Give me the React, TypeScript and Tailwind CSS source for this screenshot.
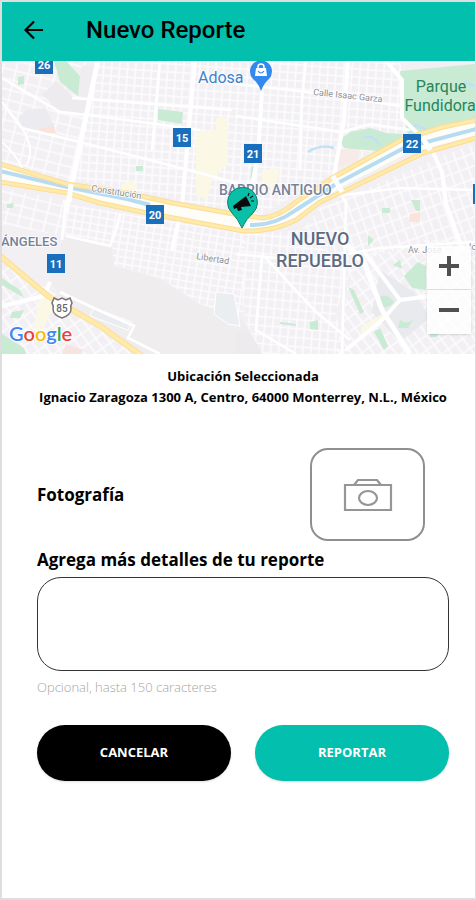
import type { ReactNode } from "react";

const shields = [
  { n: "26", x: 44, y: 65 },
  { n: "15", x: 182, y: 138 },
  { n: "21", x: 253, y: 154 },
  { n: "22", x: 412, y: 144 },
  { n: "20", x: 155, y: 215 },
  { n: "11", x: 56, y: 264 },
];

const googleLetters = [
  { c: "G", fill: "#4285f4" },
  { c: "o", fill: "#ea4335" },
  { c: "o", fill: "#fbbc05" },
  { c: "g", fill: "#4285f4" },
  { c: "l", fill: "#34a853" },
  { c: "e", fill: "#ea4335" },
];

function StreetPattern({ id, w, h, angle }: { id: string; w: number; h: number; angle: number }) {
  return (
    <pattern id={id} width={w} height={h} patternUnits="userSpaceOnUse" patternTransform={`rotate(${angle})`}>
      <path d={`M0 ${h / 2}H${w}M${w / 2} 0V${h}`} stroke="#fcfbfd" strokeWidth="1.6" />
    </pattern>
  );
}

function Halo({ children, ...rest }: { children: ReactNode } & React.SVGProps<SVGTextElement>) {
  return (
    <text stroke="#ffffff" strokeWidth="2" strokeOpacity="0.8" paintOrder="stroke" strokeLinejoin="round" {...rest}>
      {children}
    </text>
  );
}

function CityMap() {
  return (
    <svg
      viewBox="2 61 473 293"
      preserveAspectRatio="xMidYMid slice"
      className="block h-full w-full font-[Roboto,sans-serif]"
      role="img"
      aria-label="Mapa de Monterrey"
    >
      <defs>
        <StreetPattern id="north" w={8} h={8} angle={4} />
        <StreetPattern id="west" w={13} h={10} angle={14} />
        <StreetPattern id="south" w={8} h={7} angle={9} />
        <StreetPattern id="east" w={9} h={12} angle={-20} />
        <StreetPattern id="southeast" w={8} h={9} angle={5} />
        <StreetPattern id="diagonal" w={9} h={12} angle={-36} />
      </defs>

      <rect x="0" y="60" width="480" height="300" fill="#f3f0f4" />

      {/* street grids */}
      <path d="M96 60H400L410 130L335 172L255 218L170 198L76 180Z" fill="url(#north)" />
      <path d="M0 60H96L72 186L0 166Z" fill="url(#west)" />
      <path d="M0 188L68 200L64 236L0 224Z" fill="url(#west)" />
      <path d="M66 203L245 234L244 318L200 304L160 278L114 265L112 246L64 236Z" fill="url(#south)" />
      <path d="M320 208L476 142V250H400L350 262L300 232Z" fill="url(#east)" />
      <path d="M240 234L300 230L352 268L336 312L345 354H262L244 320Z" fill="url(#southeast)" />
      <path d="M352 262L425 240H476V354H336Z" fill="url(#diagonal)" />
      <path d="M0 260L50 290L140 354H0Z" fill="url(#diagonal)" />

      {/* open land, yards and campuses */}
      <path d="M64 236L112 247L114 266L160 279L200 305L243 320L262 354H142L62 300L50 280Z" fill="#f0edef" />
      <path d="M46 92L56 80L74 98L92 100L88 114L58 110L42 94Z" fill="#eeebef" />
      <path d="M19 118L26 110L46 108L54 126L42 132L22 130Z" fill="#ebebf0" />
      <path d="M82 66L98 64L92 98L76 96Z" fill="#f0edf1" />
      <path d="M216 292L234 294L240 326L228 324L214 314Z" fill="#ebeef0" stroke="#fff" />
      <path d="M94 308L132 322L128 330L90 316Z" fill="#e9ecf0" stroke="#fff" />
      <path d="M185 209L240 221L236 226L186 216Z" fill="#eceaf2" />
      <path d="M380 270L414 292L430 318L400 342L372 312Z" fill="#e8eaee" />
      <path d="M2 338Q0 326 12 342V354H2Z" fill="#eeebee" />
      <path d="M236 332Q250 326 262 354H236Z" fill="#eeebee" />
      <path d="M338 150L360 146L358 162L338 168Z" fill="#f7ebea" />
      <path d="M40 128L54 126L56 133H40Z" fill="#fae3dc" />
      <path d="M410 214L420 212V222H409Z" fill="#fbe3d9" />
      <path d="M66 344L84 350L80 354H62Z" fill="#f8e3e3" />

      {/* commercial areas */}
      <g fill="#fcf8e6">
        <path d="M196 132L216 130V118H228V164L214 176L206 200L196 194Z" />
        <path d="M262 170L280 168L276 184L262 190Z" />
        <path d="M122 184L130 180L138 186L134 192H122Z" />
        <path d="M40 290L48 284L52 310L40 336L34 330Z" />
        <path d="M362 326L386 312L388 318L360 336Z" />
      </g>

      {/* parks */}
      <g fill="#c9ebd4">
        <path d="M54 61H66L80 76L78 96L60 82Z" />
        <path d="M158 109L183 112L182 124L158 120Z" />
        <path d="M18 77L24 76V84L18 85Z" />
        <path d="M136 166H143V171H136Z" />
        <path d="M7 204L14 203L13 208H7Z" />
        <path d="M400 71L475 64V124L450 124L432 132L408 134L402 110Z" />
        <path d="M340 140L350 132L370 128L386 133L402 134V146L388 152L344 148Z" />
        <path d="M404 276L418 262L426 266V290L412 288Z" />
        <path d="M393 265L400 260L402 269Z" />
        <path d="M368 235L374 240L368 246Z" />
        <path d="M348 287L354 290L364 312L360 314Z" />
        <path d="M374 332L380 328L388 346L384 350Z" />
        <path d="M378 300Q384 290 394 302Q388 310 378 306Z" />
        <path d="M400 320Q408 326 414 318L408 328H398Z" />
        <path d="M310 322L318 320V330L310 329Z" />
        <path d="M382 208H390V213H382Z" />
        <path d="M411 200H420V211H416Z" />
        <path d="M12 312L24 310L20 318L10 318Z" />
        <path d="M2 278L20 290L24 298L2 285Z" />
        <path d="M2 334L24 348L26 354H2Z" />
        <path d="M252 166H257L254 178H250Z" />
        <path d="M430 333H440L436 337H430Z" />
      </g>
      <path d="M280 323L296 325" stroke="#c9ebd4" strokeWidth="2" />

      {/* streams */}
      <g fill="none" stroke="#bfe0f7" strokeWidth="2.4">
        <path d="M364 138Q374 134 380 146" />
        <path d="M308 152Q320 144 334 148" />
        <path d="M408 128Q418 122 428 132" />
        <path d="M464 82L475 86" />
      </g>

      {/* main streets */}
      <g fill="none" stroke="#ffffff" strokeWidth="2.6">
        <path d="M98 60L66 212" strokeWidth="5" />
        <path d="M66 200L62 240" />
        <path d="M195 60L182 206L172 250" strokeWidth="4" />
        <path d="M160 60L152 150" />
        <path d="M2 78L60 112L96 116L200 130" />
        <path d="M72 98L232 110" />
        <path d="M2 102L22 128L80 142L196 172L240 184" />
        <path d="M22 128Q36 150 26 166" strokeWidth="2" />
        <path d="M2 142Q16 154 22 168" strokeWidth="2" />
        <path d="M262 92L258 154L252 186" strokeWidth="4" />
        <path d="M348 60L344 120L334 176" strokeWidth="4" />
        <path d="M236 84L316 93L400 106" />
        <path d="M236 116L342 132L370 124L410 130" />
        <path d="M385 60L402 80V118L430 146L442 172L446 204L462 248" strokeWidth="4" />
        <path d="M306 60L302 100L300 170" />
        <path d="M336 183L346 204L342 354" />
        <path d="M336 196L400 188L475 190" />
        <path d="M236 254L360 266" />
        <path d="M342 240L364 262L382 310L410 354" strokeWidth="5" />
        <path d="M364 252L400 300L430 296" strokeWidth="4" />
        <path d="M400 300L382 320L346 350" strokeWidth="4" />
        <path d="M348 254L380 248L475 242" />
        <path d="M262 254L316 312L350 340" />
        <path d="M262 256L256 330L296 354" />
        <path d="M66 236L110 246Q118 226 120 214" />
        <path d="M2 306L44 296L50 282" strokeWidth="4" />
        <path d="M60 292L98 310L134 326L128 338L160 354" />
      </g>

      {/* river and expressways */}
      <g fill="none" strokeLinejoin="round">
        <path d="M0 172L67 189L150 207L230 223L262 224L296 212L334 183L404 147L476 128" stroke="#fffdf7" strokeWidth="14" />
        <path d="M0 171L67 187L127 199L150 205" stroke="#b6dcf4" strokeWidth="4" />
        <path d="M250 225Q274 226 296 210L336 184L404 148L476 129" stroke="#b6dcf4" strokeWidth="4" />
        <g stroke="#fbdd98" strokeWidth="5">
          <path d="M0 164L67 184L127 193L173 203L240 215L263 218Q280 216 296 202L334 177L403 139L443 127L476 120" />
          <path d="M0 182L67 193L100 203L147 213L216 226L244 231Q272 232 296 220L320 202L353 187L423 153L476 138" />
          <path d="M0 256L48 296L100 326L142 356" strokeWidth="6" />
        </g>
        <g stroke="#ffeaa9" strokeWidth="3">
          <path d="M0 164L67 184L127 193L173 203L240 215L263 218Q280 216 296 202L334 177L403 139L443 127L476 120" />
          <path d="M0 182L67 193L100 203L147 213L216 226L244 231Q272 232 296 220L320 202L353 187L423 153L476 138" />
          <path d="M0 256L48 296L100 326L142 356" strokeWidth="4" />
        </g>
        <path d="M71 184L69 202M333 176L342 192M424 140L430 150" stroke="#ffffff" strokeWidth="5" />
      </g>

      {/* labels */}
      <g fill="#8b8f96" fontSize="9">
        <Halo x="91" y="191" transform="rotate(9 91 191)">Constitución</Halo>
        <Halo x="313" y="95" transform="rotate(6 313 95)">Calle Isaac Garza</Halo>
        <Halo x="196" y="259" transform="rotate(9 196 259)">Libertad</Halo>
        <Halo x="408" y="253">Av. José</Halo>
        <Halo x="469" y="250">Ic</Halo>
      </g>
      <g fill="#76829a" fontWeight="500">
        <Halo x="219" y="195" fontSize="14">BARRIO ANTIGUO</Halo>
        <Halo x="1" y="246" fontSize="13">ÁNGELES</Halo>
      </g>
      <g fill="#5c6b82" fontSize="18" fontWeight="500" textAnchor="middle">
        <Halo x="320" y="245">NUEVO</Halo>
        <Halo x="320" y="267">REPUEBLO</Halo>
      </g>
      <Halo x="198" y="83" fill="#3c82cc" fontSize="16">Adosa</Halo>
      <g fill="#25855a" fontSize="16" textAnchor="middle">
        <text x="441" y="92">Parque</text>
        <text x="440" y="111">Fundidora</text>
      </g>

      {shields.map((s) => (
        <g key={s.n}>
          <rect x={s.x - 9} y={s.y - 10} width="18" height="19" fill="#1a6fbd" />
          <text x={s.x} y={s.y + 4} fill="#ffffff" fontSize="11" fontWeight="700" textAnchor="middle">
            {s.n}
          </text>
        </g>
      ))}
      <rect x="473" y="184" width="4" height="20" fill="#1a6fbd" />

      <path
        d="M54 298L58 300L62 298L66 300L70 298L72 303Q70 306 71 309Q71 315 62 318Q53 315 53 309Q54 306 52 303Z"
        fill="#ffffff"
        stroke="#777777"
        strokeWidth="1.5"
      />
      <text x="62" y="312" fill="#666666" fontSize="10" fontWeight="500" textAnchor="middle">
        85
      </text>

      {/* shop pin */}
      <path d="M261 91Q258 83 253 79A11 11 0 1 1 269 79Q264 83 261 91Z" fill="#3289ee" />
      <path d="M256 68H266L267 76H255Z" fill="#ffffff" />
      <path d="M258 69V67A3 3 0 0 1 264 67V69" fill="none" stroke="#ffffff" strokeWidth="1.5" />
      <path d="M258 71Q261 75 264 71" fill="none" stroke="#3289ee" strokeWidth="1.2" />

      {/* selected location pin */}
      <path
        d="M242 228Q238 219 232 213A15 15 0 1 1 253 213Q246 219 242 228Z"
        fill="#0abfa8"
        stroke="#12806f"
        strokeWidth="1"
      />
      <path d="M233 206L246 196L251 206L241 207L242 210L238 211L237 208L234 209Z" fill="#0a0a0a" />
      <path d="M248 196L249 193M250 198L253 196M251 201H254" stroke="#0a0a0a" strokeWidth="1.2" />

      <text
        x="9"
        y="341"
        fontSize="20"
        fontWeight="600"
        stroke="#ffffff"
        strokeWidth="2"
        paintOrder="stroke"
        className="font-[Lato,sans-serif]"
      >
        {googleLetters.map((l, i) => (
          <tspan key={i} fill={l.fill}>
            {l.c}
          </tspan>
        ))}
      </text>
    </svg>
  );
}

export default function App() {
  return (
    <div className="flex min-h-screen flex-col border-2 border-r border-[#dedede] bg-white font-['Open_Sans',sans-serif] text-black">
      <header className="flex h-[59px] items-center bg-[#03bfad] pb-1 pl-5">
        <button type="button" aria-label="Volver" className="flex h-10 w-6 items-center">
          <svg viewBox="0 0 24 24" className="size-6" fill="none" stroke="#000000" strokeWidth="2.2">
            <path d="M21 12H4M12 3.500L3.500 12L12 20.500" />
          </svg>
        </button>
        <h1 className="pl-10 font-[Roboto,sans-serif] text-2xl font-medium">Nuevo Reporte</h1>
      </header>

      <section className="relative h-[293px] overflow-hidden">
        <CityMap />
        <div className="absolute right-1 bottom-5 flex w-[44px] flex-col bg-white/80 shadow">
          <button type="button" aria-label="Acercar" className="flex h-11 items-center justify-center border-b border-[#dddddd] pb-1">
            <svg viewBox="0 0 20 20" className="size-5" stroke="#505050" strokeWidth="4">
              <path d="M0 10H20M10 0V20" />
            </svg>
          </button>
          <button type="button" aria-label="Alejar" className="flex h-11 items-center justify-center pb-1">
            <svg viewBox="0 0 20 20" className="size-5" stroke="#505050" strokeWidth="4">
              <path d="M0 10H20" />
            </svg>
          </button>
        </div>
      </section>

      <section className="pt-3 pr-[26px] pl-[35px] text-center text-[13px] leading-[21px] font-bold">
        <h2>Ubicación Seleccionada</h2>
        <p>Ignacio Zaragoza 1300 A, Centro, 64000 Monterrey, N.L., México</p>
      </section>

      <form className="flex flex-col pt-10 pr-[26px] pl-[35px]">
        <div className="flex items-center justify-between pr-6">
          <span className="text-[17px] font-bold">Fotografía</span>
          <button
            type="button"
            aria-label="Agregar fotografía"
            className="flex h-[93px] w-[115px] items-center justify-center rounded-[18px] border-2 border-[#8f8f8f]"
          >
            <svg viewBox="0 0 50 34" className="h-[34px] w-[50px]" fill="none" stroke="#969696" strokeWidth="2.200">
              <path d="M2 7H48V32H2ZM11 7L15 2H34L38 7" />
              <ellipse cx="25" cy="20" rx="9" ry="7" />
            </svg>
          </button>
        </div>
        <label htmlFor="detalles" className="pt-1.5 text-[17px] leading-[26px] font-bold">
          Agrega más detalles de tu reporte
        </label>
        <textarea
          id="detalles"
          maxLength={150}
          aria-describedby="ayuda"
          className="mt-1 h-[94px] w-full resize-none rounded-3xl border border-[#333333] px-4 py-3 text-sm outline-none"
        />
        <p id="ayuda" className="pt-1.5 text-[13px] leading-[21px] font-light text-[#a5a5a5]">
          Opcional, hasta 150 caracteres
        </p>
        <div className="flex gap-6 pt-[27px]">
          <button type="button" className="h-14 flex-1 rounded-full bg-black text-[13px] font-bold text-white shadow">
            CANCELAR
          </button>
          <button type="submit" className="h-14 flex-1 rounded-full bg-[#03bfad] text-[13px] font-bold text-white shadow">
            REPORTAR
          </button>
        </div>
      </form>
    </div>
  );
}
